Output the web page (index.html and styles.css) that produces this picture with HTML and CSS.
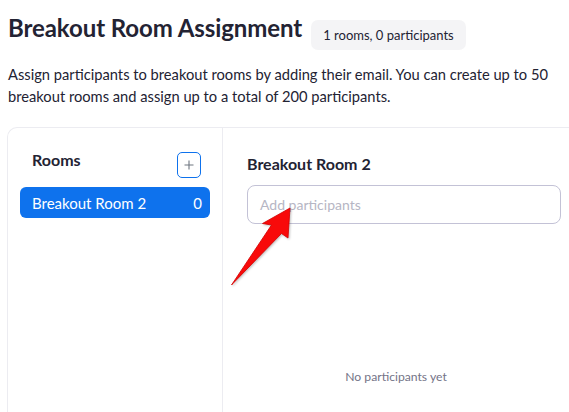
FILE: index.html
```html
<!DOCTYPE html>
<html>
<head>
<meta charset="utf-8">
<link rel="stylesheet" href="styles.css">
</head>
<body>
<div class="page">
  <div class="header">
    <h1 class="title">Breakout Room Assignment</h1>
    <span class="badge">1 rooms, 0 participants</span>
  </div>
  <p class="desc">Assign participants to breakout rooms by adding their email. You can create up to 50 breakout rooms and assign up to a total of 200 participants.</p>
  <div class="panel">
    <div class="rooms">
      <div class="rooms-head">
        <span class="rooms-title">Rooms</span>
        <button class="add-btn" aria-label="Add room">
          <svg width="10" height="10" viewBox="0 0 10 10"><path d="M5 0.5v9M0.5 5h9" stroke="#6e7680" stroke-width="1.1" fill="none"/></svg>
        </button>
      </div>
      <div class="room-item">
        <span>Breakout Room 2</span>
        <span>0</span>
      </div>
    </div>
    <div class="detail">
      <div class="detail-title">Breakout Room 2</div>
      <div class="input">Add participants</div>
      <div class="empty">No participants yet</div>
    </div>
  </div>
  <svg class="arrow" width="70" height="90" viewBox="0 0 70 90">
    <polygon points="64,4 62,34 55.5,29.5 5.5,81 45.5,21 36.5,19.5" fill="#f80a0a" stroke="#d40000" stroke-width="0.8" stroke-linejoin="round"/>
  </svg>
</div>
</body>
</html>
```
FILE: styles.css
```css
html, body {
  margin: 0;
  padding: 0;
  background: #ffffff;
  overflow: hidden;
}
body {
  font-family: Lato, "Open Sans", sans-serif;
  color: #232333;
  width: 569px;
  height: 412px;
}
.page {
  position: relative;
  padding: 13px 0 0 8px;
}
.header {
  display: flex;
  align-items: flex-start;
  gap: 9px;
}
.title {
  margin: 0;
  font-size: 24px;
  line-height: 29px;
  font-weight: 700;
  color: #232333;
  letter-spacing: -0.08px;
}
.badge {
  margin-top: 7px;
  height: 30px;
  line-height: 30px;
  padding: 0 12px;
  background: #f4f4f6;
  border-radius: 7px;
  font-size: 13px;
  color: #232333;
}
.desc {
  margin: 13px 0 0 0;
  font-size: 14.7px;
  line-height: 22px;
  width: 556px;
}
.panel {
  margin: 20px 0 0 -1px;
  display: flex;
  width: 562px;
  height: 284px;
  border-top: 1px solid #ececf1;
  border-left: 1px solid #ececf1;
  border-top-left-radius: 10px;
}
.rooms {
  width: 190px;
  padding: 22px 12px 0 12px;
  border-right: 1px solid #ececf1;
}
.rooms-head {
  display: flex;
  justify-content: space-between;
  align-items: flex-start;
  padding-left: 12px;
  margin-bottom: 9px;
}
.rooms-title {
  font-size: 16px;
  line-height: 20px;
  font-weight: 700;
}
.add-btn {
  margin: 2px 9px 0 0;
  width: 24px;
  height: 26px;
  padding: 0;
  border: 1px solid #0e72ed;
  border-radius: 5px;
  background: #fff;
  display: flex;
  align-items: center;
  justify-content: center;
}
.room-item {
  display: flex;
  justify-content: space-between;
  align-items: center;
  height: 31px;
  padding: 0 8px 0 12px;
  background: #0e72ed;
  color: #fff;
  border-radius: 6px;
  font-size: 15px;
}
.detail {
  width: 314px;
  padding: 26px 8px 0 24px;
  display: flex;
  flex-direction: column;
}
.detail-title {
  font-size: 16px;
  line-height: 20px;
  font-weight: 700;
  margin-bottom: 11px;
}
.input {
  box-sizing: border-box;
  height: 39px;
  width: 314px;
  border: 1px solid #c3c2d6;
  border-radius: 8px;
  padding: 0 12px;
  line-height: 37px;
  font-size: 14px;
  color: #b6b6c4;
}
.empty {
  margin: 145px -8px 0 -24px;
  text-align: center;
  font-size: 12.2px;
  line-height: 16px;
  color: #747487;
}
.arrow {
  position: absolute;
  left: 226px;
  top: 204px;
  filter: drop-shadow(1px 1px 1px rgba(0,0,0,0.25));
}
```
